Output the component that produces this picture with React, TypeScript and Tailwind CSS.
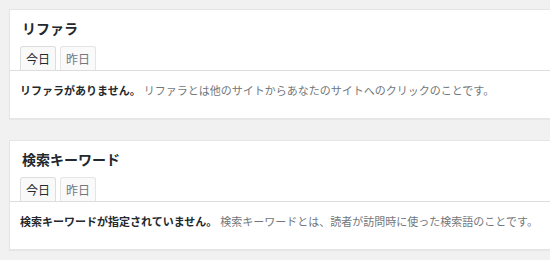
import React from "react";

const font = { fontFamily: '"Noto Sans CJK JP", "Noto Sans", sans-serif' };

function Card({ title, bold, desc }: { title: string; bold: string; desc: string }) {
  return (
    <div className="w-[600px] border border-[#e5e5e5] bg-white shadow-[0_1px_1px_rgba(0,0,0,0.04)]">
      <h3 className="px-[12px] pt-[8px] text-[14px] leading-[20px] font-semibold text-[#23282d]">{title}</h3>
      <div className="mt-[8px] flex gap-[4px] pl-[10px] border-b border-[#dddddd]">
        <div className="h-[24px] rounded-t-[3px] border border-b-0 border-[#dddddd] bg-[#f9f9f9] px-[5px] text-[12px] leading-[23px] text-[#23282d]">今日</div>
        <div className="h-[24px] rounded-t-[3px] border border-b-0 border-[#e5e5e5] bg-[#fafafa] px-[5px] text-[12px] leading-[23px] text-[#72777c]">昨日</div>
      </div>
      <p className="px-[10px] pt-[9px] pb-[18px] text-[11px] leading-[20px] whitespace-nowrap">
        <span className="font-bold text-[#23282d]">{bold}</span>
        <span className="ml-[3px] text-[#72777c]">{desc}</span>
      </p>
    </div>
  );
}

export default function App() {
  return (
    <div className="w-[550px] h-[260px] overflow-hidden bg-[#f1f1f1] pl-[9px] pt-[9px] flex flex-col gap-[21px]" style={font}>
      <Card title="リファラ" bold="リファラがありません。" desc="リファラとは他のサイトからあなたのサイトへのクリックのことです。" />
      <Card title="検索キーワード" bold="検索キーワードが指定されていません。" desc="検索キーワードとは、読者が訪問時に使った検索語のことです。" />
    </div>
  );
}
